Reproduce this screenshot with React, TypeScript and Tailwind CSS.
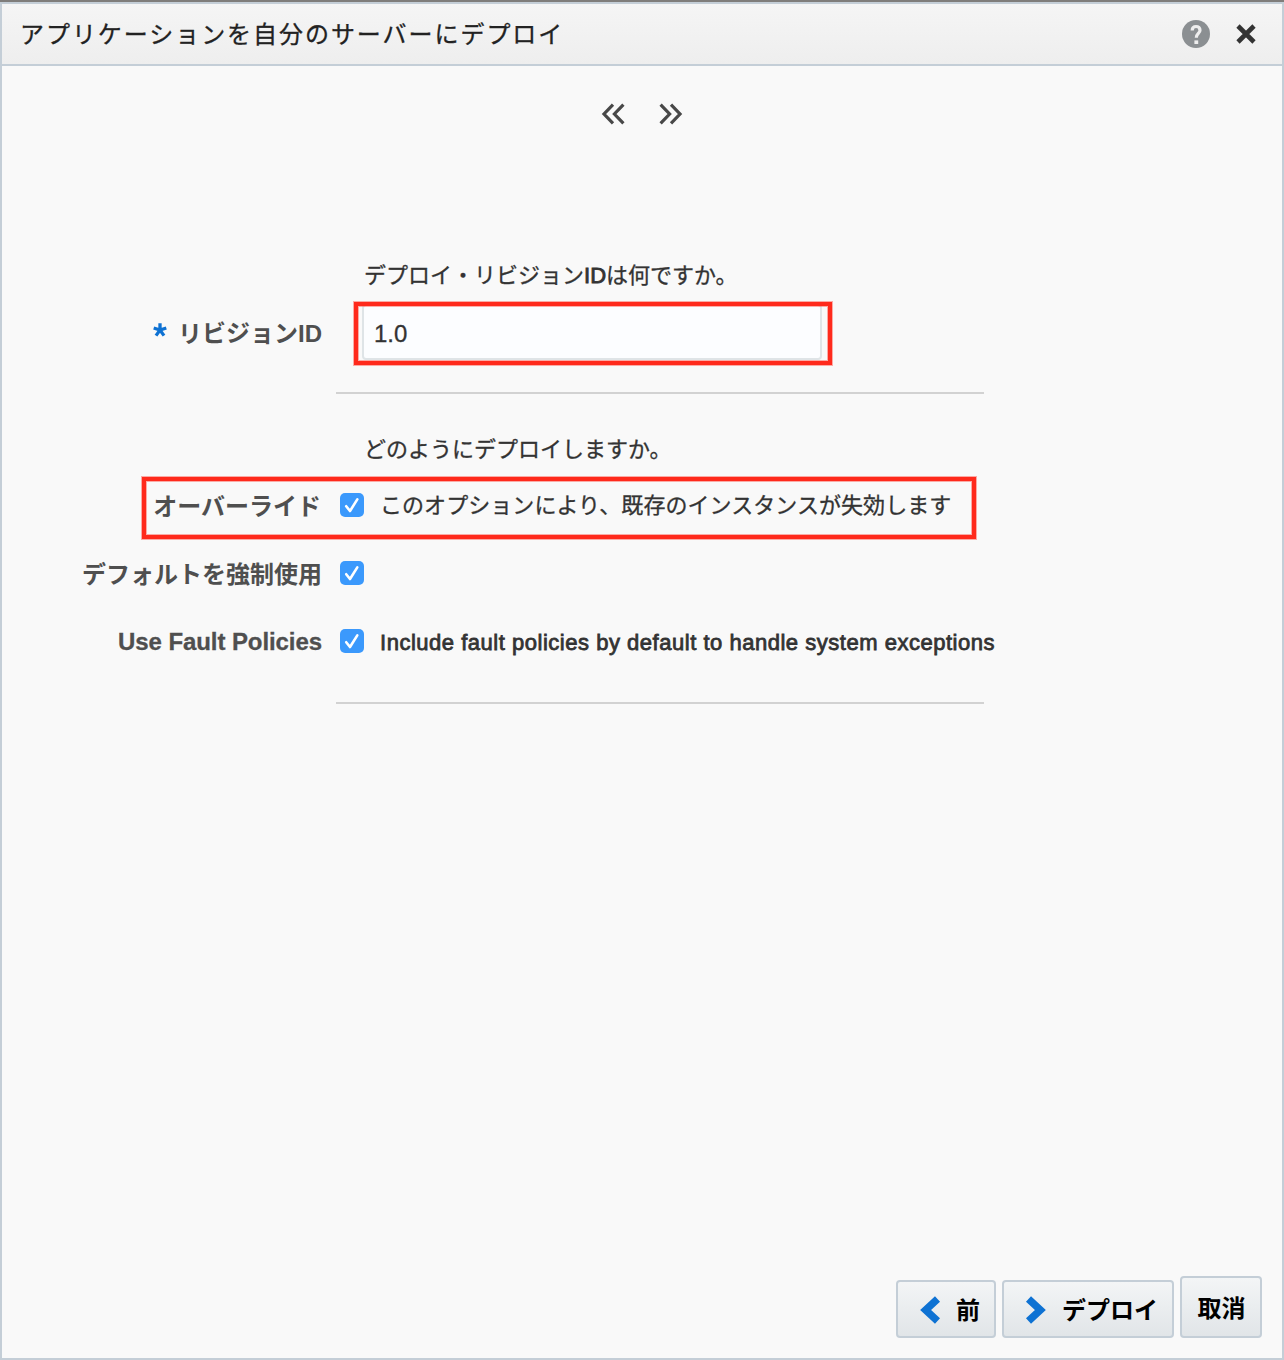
import React from "react";

function Checkbox() {
  return (
    <span className="flex h-6 w-6 shrink-0 items-center justify-center rounded-[5px] bg-[#3b99fc]">
      <svg viewBox="0 0 24 24" className="h-6 w-6" fill="none" stroke="#fff" strokeWidth="2.6" strokeLinecap="round" strokeLinejoin="round">
        <path d="M6.2 13.2 L10 18 L17.3 6.4" />
      </svg>
    </span>
  );
}

function OptionRow({ label, text, labelClass, textClass = "" }: { label: string; text?: string; labelClass: string; textClass?: string }) {
  return (
    <div className="flex h-[68px] items-center">
      <div className={"w-[320px] shrink-0 whitespace-nowrap text-right text-[24px] leading-[30px] font-bold text-[#4f4f4f] " + labelClass}>{label}</div>
      <div className="ml-[18px]"><Checkbox /></div>
      {text && <div className={"ml-4 whitespace-nowrap text-[22px] leading-[30px] text-[#333] " + textClass}>{text}</div>}
    </div>
  );
}

function Highlight({ className }: { className: string }) {
  return <div className={"pointer-events-none absolute border-4 border-[#ff2a1c] shadow-[0_0_0_1px_#ff2a1c60,inset_0_0_0_1px_#ff2a1c60] " + className} />;
}

const button = "flex items-center rounded-[4px] border-2 border-[#c4ced7] bg-linear-to-b from-[#f3f5f6] to-[#e1e5e8] text-[24px] leading-[30px] font-bold text-black whitespace-nowrap";

export default function App() {
  return (
    <div className="h-[1360px] w-[1284px] overflow-hidden border-t-2 border-[#7f7d7b] bg-[#f9f9f9] font-['Liberation_Sans','Noto_Sans_CJK_JP',sans-serif]">
      <div className="flex h-[1358px] flex-col border-2 border-[#c4ced7]">
        <header className="flex h-[62px] shrink-0 items-center border-b-2 border-[#c4ced7] bg-linear-to-b from-[#f5f5f5] to-[#eeeeee] pl-[18px] pr-[26px]">
          <h1 className="pt-[2px] text-[24px] leading-[30px] tracking-[1.95px] text-[#222] [-webkit-text-stroke:0.3px_#222]">アプリケーションを自分のサーバーにデプロイ</h1>
          <div className="ml-auto flex items-center gap-[26px]">
            <svg viewBox="0 0 28 28" className="h-7 w-7">
              <circle cx="14" cy="14" r="14" fill="#8b8f92" />
              <path d="M10.2 10.4 C10.2 7.8 11.8 6.5 14.1 6.5 C16.4 6.5 18 8 18 10.2 C18 13.5 14.3 13.5 14.3 17.8" fill="none" stroke="#eee" strokeWidth="3.2" />
              <rect x="12.4" y="20.4" width="3.8" height="3.6" fill="#eee" />
            </svg>
            <svg viewBox="0 0 20 20" className="h-5 w-5" fill="none" stroke="#333" strokeWidth="4.6">
              <path d="M2 2 L18 18 M18 2 L2 18" />
            </svg>
          </div>
        </header>

        <main className="relative flex grow flex-col">
          <nav className="mt-[36px] flex h-6 justify-center gap-[34px]">
            <svg viewBox="0 0 24 24" className="h-6 w-6" fill="none" stroke="#484848" strokeWidth="3.2">
              <path d="M12 2.7 L3 12 L12 21.3 M22.4 2.7 L13.4 12 L22.4 21.3" />
            </svg>
            <svg viewBox="0 0 24 24" className="h-6 w-6" fill="none" stroke="#484848" strokeWidth="3.2">
              <path d="M1.6 2.7 L10.6 12 L1.6 21.3 M12 2.7 L21 12 L12 21.3" />
            </svg>
          </nav>

          <p className="mt-[135px] ml-[362px] h-[30px] text-[22px] leading-[30px] text-[#333] [-webkit-text-stroke:0.3px_#333]">
            デプロイ・リビジョン<span className="[-webkit-text-stroke:0.9px_#333]">ID</span>は何ですか。
          </p>
          <div className="mt-[13px] flex h-14 items-center">
            <div className="flex w-[320px] items-center justify-end whitespace-nowrap pt-[3px] text-[24px] leading-[30px] font-bold text-[#4f4f4f]">
              <svg viewBox="0 0 14 14" className="mr-[11px] mb-[7px] h-[14px] w-[14px]" stroke="#0e72d3" strokeWidth="3.3">
                <path d="M7 0.3 V7 M0.7 5 L7 7 L13.3 5 M3 12.6 L7 7 L11 12.6" fill="none" />
              </svg>
              リビジョンID
            </div>
            <input
              defaultValue="1.0"
              aria-label="リビジョンID"
              className="ml-[40px] h-14 w-[460px] rounded-[4px] border-2 border-[#dfe4e7] bg-[#fcfdff] px-[10px] pt-[3px] text-[24px] text-[#333] outline-none [-webkit-text-stroke:0.3px_#333]"
            />
          </div>
          <hr className="mt-8 ml-[334px] w-[648px] border-t-2 border-[#d2d2d2]" />

          <p className="mt-[41px] ml-[362px] h-[30px] text-[22px] leading-[30px] text-[#333] [-webkit-text-stroke:0.3px_#333]">どのようにデプロイしますか。</p>
          <div className="mt-[6px]">
            <OptionRow
              label="オーバーライド"
              labelClass="pt-1 pr-[1px]"
              text="このオプションにより、既存のインスタンスが失効します"
              textClass="pt-[2px] tracking-[0.06px] [-webkit-text-stroke:0.3px_#333]"
            />
            <OptionRow label="デフォルトを強制使用" labelClass="pt-1" />
            <OptionRow
              label="Use Fault Policies"
              labelClass="pt-[2px] tracking-[-0.08px] [-webkit-text-stroke:0.3px_#4f4f4f]"
              text="Include fault policies by default to handle system exceptions"
              textClass="pt-[3px] tracking-[0.52px] [-webkit-text-stroke:0.8px_#333]"
            />
          </div>
          <hr className="mt-[27px] ml-[334px] w-[648px] border-t-2 border-[#d2d2d2]" />

          <Highlight className="top-[236px] left-[352px] h-[63px] w-[478px]" />
          <Highlight className="top-[411px] left-[140px] h-[62px] w-[834px]" />

          <footer className="mt-auto mb-5 flex items-end justify-end gap-[6px] pr-5">
            <button className={button + " h-[58px] w-[100px] pt-[3px] pl-[21px]"}>
              <svg viewBox="0 0 22 28" className="mr-[15px] mb-[2px] h-7 w-[22px]" fill="none" stroke="#0e72d3" strokeWidth="7.4">
                <path d="M18.5 3 L6.6 14 L18.5 25" />
              </svg>
              前
            </button>
            <button className={button + " h-[58px] w-[172px] pt-[3px] pl-[21px]"}>
              <svg viewBox="0 0 22 28" className="mr-[15px] mb-[2px] h-7 w-[22px]" fill="none" stroke="#0e72d3" strokeWidth="7.4">
                <path d="M3.5 3 L15.4 14 L3.5 25" />
              </svg>
              デプロイ
            </button>
            <button className={button + " h-[62px] w-[82px] justify-center pt-1 pl-[1px]"}>取消</button>
          </footer>
        </main>
      </div>
    </div>
  );
}
